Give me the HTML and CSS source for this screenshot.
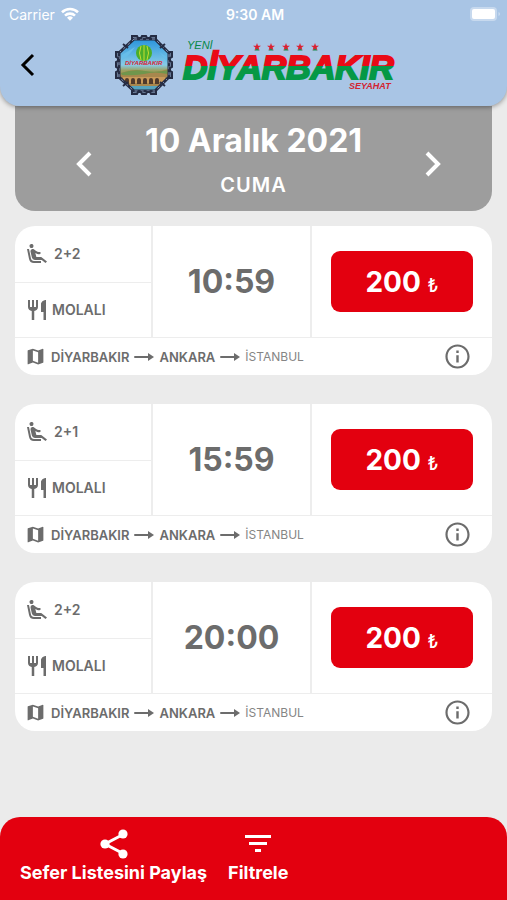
FILE: index.html
```html
<!DOCTYPE html>
<html lang="tr">
<head>
<meta charset="utf-8">
<meta name="viewport" content="width=device-width, initial-scale=1">
<title>Sefer Listesi</title>
<link rel="stylesheet" href="styles.css">
</head>
<body>
<svg class="defs" aria-hidden="true">
  <symbol id="seat" viewBox="0 0 24 24"><path d="M5.35 5.64c-.9-.64-1.12-1.88-.49-2.79.63-.9 1.88-1.12 2.79-.49.9.64 1.12 1.88.49 2.79-.64.9-1.88 1.12-2.79.49zM16 19H8.93c-1.48 0-2.74-1.08-2.96-2.54L4 7H2l1.99 9.76A5.01 5.01 0 0 0 8.94 21H16v-2zm.23-4h-4.88l-1.03-4.1c1.58.89 3.28 1.54 5.15 1.22V9.99c-1.63.31-3.44-.27-4.69-1.25L9.14 7.47c-.23-.18-.49-.3-.76-.38a2.21 2.21 0 0 0-.99-.06h-.02a2.268 2.268 0 0 0-1.84 2.61l1.35 5.92A3.008 3.008 0 0 0 9.83 18h6.85l3.82 3 1.5-1.5-5.77-4.5z"/></symbol>
  <symbol id="meal" viewBox="0 0 24 24"><path d="M11 9H9V2H7v7H5V2H3v7c0 2.12 1.66 3.84 3.75 3.97V22h2.5v-9.03C11.34 12.84 13 11.12 13 9V2h-2v7zm5-3v8h2.5v8H21V2c-2.76 0-5 2.24-5 4z"/></symbol>
  <symbol id="map" viewBox="0 0 24 24"><path d="M20.5 3l-.16.03L15 5.1 9 3 3.36 4.9c-.21.07-.36.25-.36.48V20.5c0 .28.22.5.5.5l.16-.03L9 18.9l6 2.1 5.64-1.9c.21-.07.36-.25.36-.48V3.5c0-.28-.22-.5-.5-.5zM15 19l-6-2.11V5l6 2.11V19z"/></symbol>
  <symbol id="arrow" viewBox="0 0 20 10"><path d="M1 4h13V1l6 4-6 4V6H1a1 1 0 0 1 0-2z"/></symbol>
  <symbol id="info" viewBox="0 0 24 24"><path d="M11 7h2v2h-2zm0 4h2v6h-2zm1-9C6.480 2 2 6.480 2 12s4.480 10 10 10 10-4.480 10-10S17.520 2 12 2zm0 18.200c-4.530 0-8.200-3.670-8.200-8.200S7.470 3.800 12 3.800s8.200 3.670 8.200 8.200-3.670 8.200-8.200 8.200z"/></symbol>
</svg>

<header class="header">
  <div class="status">
    <span class="carrier">Carrier
      <svg class="wifi" viewBox="0 0 18 14" aria-hidden="true"><g fill="none" stroke="currentColor" stroke-width="2.600"><path d="M1 5.200a11.500 11.500 0 0 1 16 0"/><path d="M4 8.600a7.300 7.300 0 0 1 10 0"/></g><path d="M9 13.700l-3-3a4.300 4.300 0 0 1 6 0z"/></svg>
    </span>
    <span class="clock">9:30 AM</span>
    <svg class="battery" viewBox="0 0 31 14" aria-hidden="true"><rect width="27" height="14" rx="4" opacity=".35"/><rect x="2" y="2" width="23" height="10" rx="2"/><path d="M28.500 5v4q1.500-.5 1.500-2t-1.500-2z" opacity=".4"/></svg>
  </div>
  <nav class="nav">
    <button class="back" type="button" aria-label="Geri"><svg viewBox="0 0 16 24"><path d="M13 2 3 12l10 10" fill="none" stroke="currentColor" stroke-width="3"/></svg></button>
    <svg class="logo" viewBox="0 0 286 62" role="img" aria-label="Yeni Diyarbakır Seyahat">
      <defs>
        <linearGradient id="sky" x1="0" y1="0" x2="0" y2="1"><stop offset="0" stop-color="#2994dc"/><stop offset=".5" stop-color="#86cbe7"/><stop offset=".6" stop-color="#9aa365"/><stop offset=".8" stop-color="#a77a38"/><stop offset="1" stop-color="#4d96b0"/></linearGradient>
        <linearGradient id="flag" gradientUnits="userSpaceOnUse" x1="0" y1="19" x2="0" y2="45"><stop offset="0" stop-color="#ea0a16"/><stop offset=".5" stop-color="#ea0a16"/><stop offset=".5" stop-color="#069846"/><stop offset="1" stop-color="#069846"/></linearGradient>
        <path id="star" d="M0-4 1-1.200H4L1.600.500 2.500 3.400 0 1.700-2.500 3.400-1.600.500-4-1.200H-1z"/>
      </defs>
      <path d="M21 5h21l14 14v24L42 57H21L6 43V19z" fill="url(#sky)"/>
      <path d="M22 13q-6 9-13 13v-5zM42 12q5 8 12 11v5z" fill="#67bde9"/>
      <path d="M8 39q12-5 23-2t24-2v9L42 57H21L8 43z" fill="#a8874d"/>
      <path d="M8 39q12-4 24-2t23-1l-1 4q-12-3-23 0-12 2-22 1z" fill="#70964c"/>
      <circle cx="31" cy="19" r="8" fill="#4aae2b"/><path d="M31 11v16M28 12q-3 7 0 14M34 12q3 7 0 14" stroke="#c6dd31" fill="none"/>
      <path d="M10 43h42v6H10z" fill="#c99a5a"/>
      <path d="M12 50v-4a2 2 0 0 1 4 0v4zm6 0v-4a2 2 0 0 1 4 0v4zm6 0v-4a2 2 0 0 1 4 0v4zm6 0v-4a2 2 0 0 1 4 0v4zm6 0v-4a2 2 0 0 1 4 0v4zm6 0v-4a2 2 0 0 1 4 0v4z" fill="#4f3a2b"/>
      <path d="M17 52h29l-5 5H22z" fill="#55a3bd"/>
      <text class="badge-text" x="12" y="31">DİYARBAKIR</text>
      <path d="M21 5h21l14 14v24L42 57H21L6 43V19z" fill="none" stroke="#252c43" stroke-width="3"/>
      <path d="M21 5h21l14 14v24L42 57H21L6 43V19z" fill="none" stroke="#8797b8" stroke-width="1" stroke-dasharray="3 3"/>
      <path d="M19 6V2h5l1 2h3l1-2h4l1 2h3l1-2h5v4M19 56v4h5l1-2h3l1 2h4l1-2h3l1 2h5v-4M7 18H3v5l2 1v3l-2 1v5l2 1v3l-2 1v6h5M55 18h4v5l-2 1v3l2 1v5l-2 1v3l2 1v6h-5M10 10l5 4M52 10l-5 4M10 52l5-4M52 52l-5-4" fill="none" stroke="#252c43" stroke-width="2"/>
      <text class="yeni" x="74" y="15">YENİ</text>
      <text class="brand" x="70" y="45" fill="url(#flag)">DİYARBAKIR</text>
      <g fill="#dc1f30"><use href="#star" x="144" y="13"/><use href="#star" x="158" y="13"/><use href="#star" x="173" y="13"/><use href="#star" x="187" y="13"/><use href="#star" x="202" y="13"/></g>
      <path d="M141.500 16.500l2.500-2 2.500 2zm14 0l2.500-2 2.500 2zm15 0l2.500-2 2.500 2zm14 0l2.500-2 2.500 2zm15 0l2.500-2 2.500 2z" fill="#16884b"/>
      <text class="seyahat" x="236" y="55">SEYAHAT</text>
    </svg>
  </nav>
</header>

<main class="page">
  <section class="date">
    <button class="previous" type="button" aria-label="Önceki gün"><svg viewBox="0 0 16 26"><path d="M14 2 3 13l11 11" fill="none" stroke="currentColor" stroke-width="4"/></svg></button>
    <div class="day"><h1>10 Aralık 2021</h1><p>CUMA</p></div>
    <button class="next" type="button" aria-label="Sonraki gün"><svg viewBox="0 0 16 26"><path d="m2 2 11 11L2 24" fill="none" stroke="currentColor" stroke-width="4"/></svg></button>
  </section>

  <section class="trips">
    <article class="trip">
      <div class="main">
        <div class="features"><div><svg><use href="#seat"/></svg><span>2+2</span></div><div class="meal"><svg><use href="#meal"/></svg><span>MOLALI</span></div></div>
        <time class="time">10:59</time>
        <div class="buy"><button type="button">200 <small>₺</small></button></div>
      </div>
      <div class="route"><svg class="map"><use href="#map"/></svg><b>DİYARBAKIR</b><svg class="arrow"><use href="#arrow"/></svg><b>ANKARA</b><svg class="arrow"><use href="#arrow"/></svg><span>İSTANBUL</span><button type="button" aria-label="Bilgi"><svg><use href="#info"/></svg></button></div>
    </article>
    <article class="trip">
      <div class="main">
        <div class="features"><div><svg><use href="#seat"/></svg><span>2+1</span></div><div class="meal"><svg><use href="#meal"/></svg><span>MOLALI</span></div></div>
        <time class="time">15:59</time>
        <div class="buy"><button type="button">200 <small>₺</small></button></div>
      </div>
      <div class="route"><svg class="map"><use href="#map"/></svg><b>DİYARBAKIR</b><svg class="arrow"><use href="#arrow"/></svg><b>ANKARA</b><svg class="arrow"><use href="#arrow"/></svg><span>İSTANBUL</span><button type="button" aria-label="Bilgi"><svg><use href="#info"/></svg></button></div>
    </article>
    <article class="trip">
      <div class="main">
        <div class="features"><div><svg><use href="#seat"/></svg><span>2+2</span></div><div class="meal"><svg><use href="#meal"/></svg><span>MOLALI</span></div></div>
        <time class="time">20:00</time>
        <div class="buy"><button type="button">200 <small>₺</small></button></div>
      </div>
      <div class="route"><svg class="map"><use href="#map"/></svg><b>DİYARBAKIR</b><svg class="arrow"><use href="#arrow"/></svg><b>ANKARA</b><svg class="arrow"><use href="#arrow"/></svg><span>İSTANBUL</span><button type="button" aria-label="Bilgi"><svg><use href="#info"/></svg></button></div>
    </article>
  </section>
</main>

<footer class="actions">
  <button type="button"><svg viewBox="0 0 28 30"><path d="M24 5 5 15l19 10" fill="none" stroke="currentColor" stroke-width="3"/><circle cx="23" cy="5" r="4.600"/><circle cx="5" cy="15" r="4.600"/><circle cx="23" cy="25" r="4.600"/></svg>Sefer Listesini Paylaş</button>
  <button type="button"><svg viewBox="0 0 28 30"><path d="M1 6h26v3H1zm4 7h18v3H5zm6 7h6v3h-6z"/></svg>Filtrele</button>
</footer>
</body>
</html>
```
FILE: styles.css
```css
* { box-sizing: border-box; }
body {
  margin: 0;
  min-height: 100vh;
  display: flex;
  flex-direction: column;
  background: #ebebeb;
  color: #6c6c6c;
  font-family: Inter, "Liberation Sans", sans-serif;
}
h1, p { margin: 0; }
svg { display: block; flex: none; fill: currentColor; }
button {
  padding: 0;
  border: 0;
  background: none;
  color: inherit;
  font: inherit;
  cursor: pointer;
}
.defs { position: absolute; width: 0; height: 0; }

.header {
  position: relative;
  z-index: 1;
  padding-bottom: 10px;
  border-radius: 0 0 20px 20px;
  background: #a9c5e5;
  box-shadow: 0 1px 5px rgba(0, 0, 0, .4);
}
.status {
  display: grid;
  grid-template-columns: 1fr auto 1fr;
  align-items: center;
  height: 28px;
  padding: 0 6px 0 9px;
  color: #fff;
  font-size: 14px;
}
.carrier { display: flex; align-items: center; gap: 6px; }
.wifi { width: 18px; height: 14px; }
.clock { font-weight: 600; }
.battery { width: 31px; height: 14px; justify-self: end; }
.nav {
  display: grid;
  grid-template-columns: 1fr auto 1fr;
  align-items: center;
  height: 68px;
  padding: 6px 16px 0 20px;
}
.nav::after { content: ""; }
.back { width: 16px; color: #000; }
.back svg { width: 16px; height: 24px; }
.logo { width: 286px; height: 62px; }
.badge-text { font: italic bold 6px "Liberation Sans", sans-serif; fill: #d92632; }
.yeni { font: italic 11px "Liberation Sans", sans-serif; fill: #078849; }
.brand { font: italic bold 34px "Liberation Sans", sans-serif; stroke: url(#flag); stroke-width: 2; }
.seyahat { font: italic bold 9px "Liberation Sans", sans-serif; fill: #d32430; }

.page { flex: 1; padding: 0 15px 29px; }
.date {
  display: grid;
  grid-template-columns: 1fr auto 1fr;
  align-items: center;
  height: 105px;
  padding-top: 10px;
  border-radius: 0 0 20px 20px;
  background: #9d9d9d;
  color: #fff;
}
.date svg { width: 16px; height: 26px; }
.date .previous { justify-self: start; margin-left: 61px; }
.date .next { justify-self: end; margin-right: 51px; }
.day { text-align: center; }
h1 { font-size: 32px; line-height: 40px; font-weight: 700; }
.day p { font-size: 20px; line-height: 28px; margin: 10px 0 8px; font-weight: 600; letter-spacing: 1px; }

.trips { display: grid; gap: 29px; margin-top: 15px; }
.trip { border-radius: 20px; background: #fff; overflow: hidden; }
.main { display: grid; grid-template-columns: 136fr 161fr 180fr; height: 111px; }
.features { display: grid; grid-template-rows: 1fr 1fr; }
.features div {
  display: flex;
  align-items: center;
  gap: 5px;
  padding-left: 10px;
  font-size: 14px;
  font-weight: 600;
}
.features div + div { border-top: 1px solid #ededed; }
.features svg { width: 24px; height: 24px; }
.features .meal { gap: 3px; }
.time {
  display: flex;
  align-items: center;
  justify-content: center;
  border: solid #ededed;
  border-width: 0 2px;
  font-size: 32px;
  font-weight: 700;
}
.buy { display: grid; align-items: center; padding: 0 19px; }
.buy button {
  height: 61px;
  border-radius: 9px;
  background: #e3000f;
  color: #fff;
  font-size: 28px;
  font-weight: 700;
}
.buy small { font-size: 18px; font-weight: 500; }
.route {
  display: flex;
  align-items: center;
  gap: 5px;
  height: 38px;
  padding: 0 20px 0 10px;
  border-top: 1px solid #ededed;
  font-size: 13px;
}
.route b { font-weight: 600; }
.route span { font-size: 12px; color: #858585; }
.map { width: 21px; height: 21px; }
.arrow { width: 20px; height: 10px; }
.route button { margin-left: auto; }
.route button svg { width: 29px; height: 29px; }

.actions {
  display: flex;
  align-items: flex-start;
  gap: 21px;
  min-height: 83px;
  padding: 12px 20px;
  border-radius: 20px 20px 0 0;
  background: #e3000f;
  color: #fff;
  font-size: 18px;
  line-height: 24px;
  font-weight: 700;
}
.actions button { display: grid; justify-items: center; gap: 2px; }
.actions svg { width: 28px; height: 30px; }
```
